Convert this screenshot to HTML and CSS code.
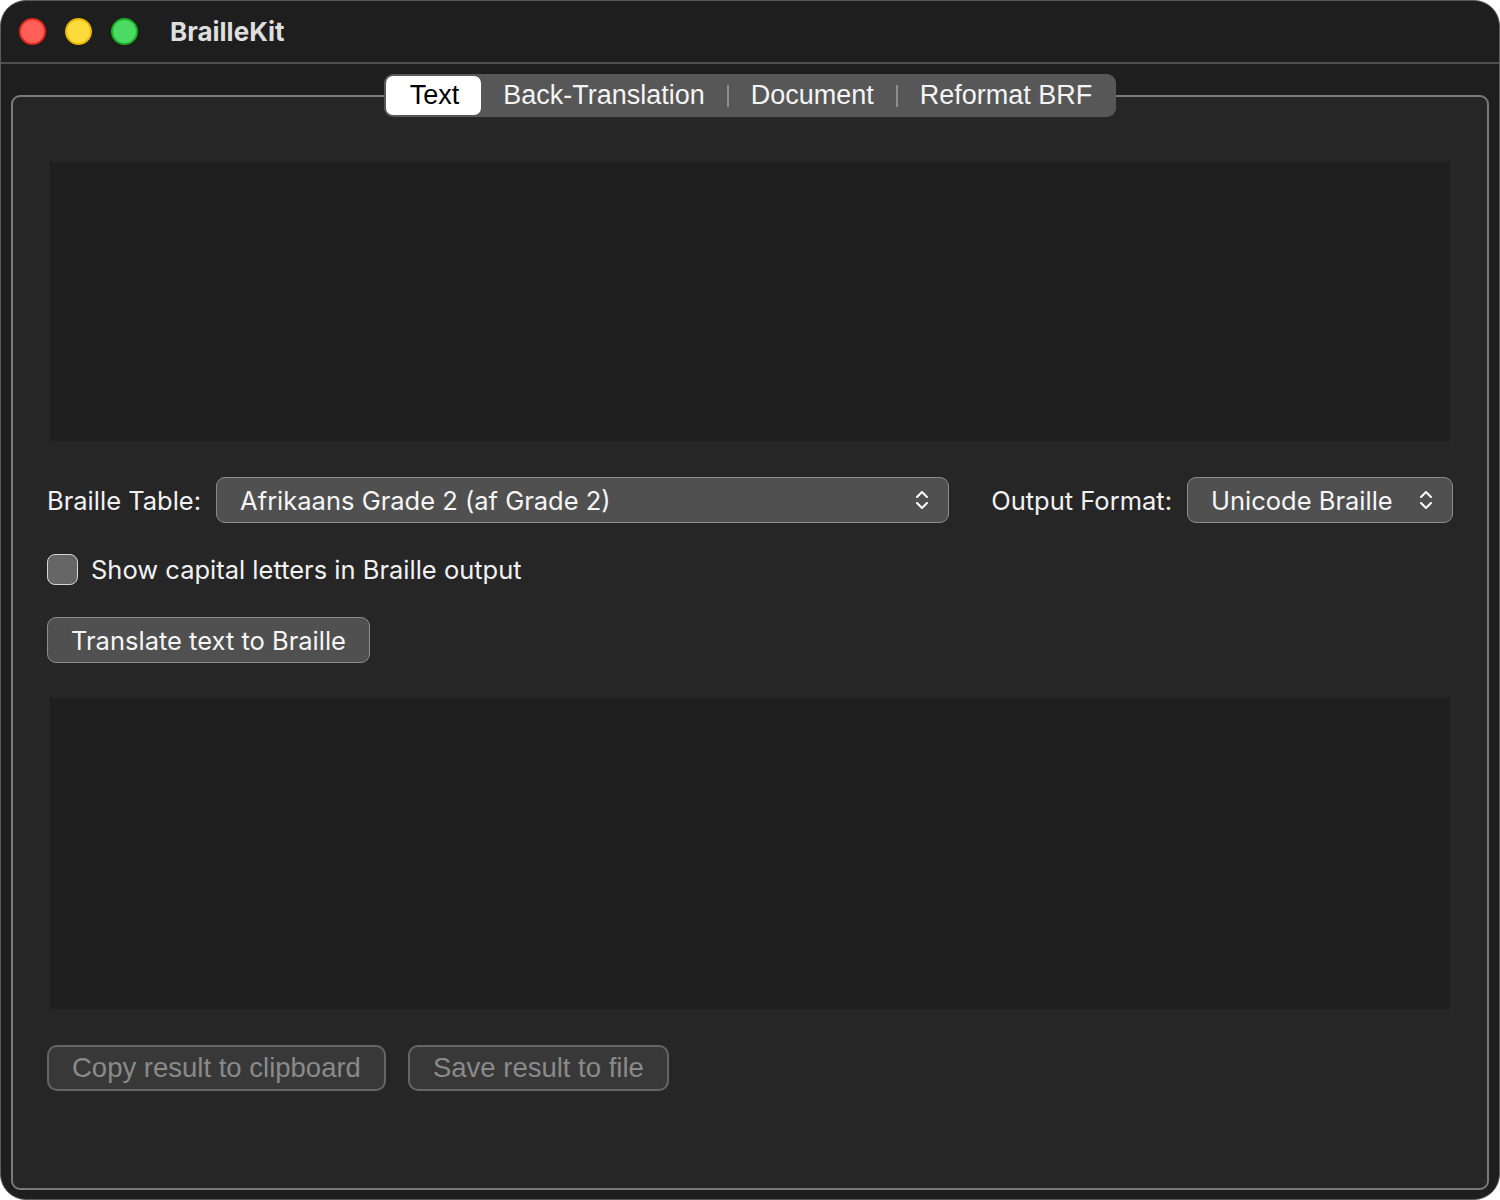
FILE: index.html
```html
<!DOCTYPE html>
<html lang="en">
<head>
    <meta charset="UTF-8">
    <meta name="viewport" content="width=device-width, initial-scale=1.0">
    <title>BrailleKit</title>
    <link rel="stylesheet" href="styles.css">
</head>
<body>
    <div class="window">
        <header class="titlebar">
            <span class="light red"></span>
            <span class="light yellow"></span>
            <span class="light green"></span>
            <h1>BrailleKit</h1>
        </header>

        <div class="tabview">
            <nav class="tabs">
                <span class="tab selected">Text</span>
                <span class="tab">Back-Translation</span>
                <span class="sep"></span>
                <span class="tab">Document</span>
                <span class="sep"></span>
                <span class="tab">Reformat BRF</span>
            </nav>

            <div class="pane">
                <div class="textbox input-box"></div>

                <div class="options">
                    <label class="field-label">Braille Table:</label>
                    <div class="popup wide">
                        <span>Afrikaans Grade 2 (af Grade 2)</span>
                        <svg class="chevron" width="14" height="24" viewBox="0 0 14 24">
                            <path d="M2 9 L7 4 L12 9 M2 15 L7 20 L12 15" fill="none" stroke="#fff" stroke-width="2" stroke-linecap="round" stroke-linejoin="round"/>
                        </svg>
                    </div>
                    <label class="field-label format-label">Output Format:</label>
                    <div class="popup format">
                        <span>Unicode Braille</span>
                        <svg class="chevron" width="14" height="24" viewBox="0 0 14 24">
                            <path d="M2 9 L7 4 L12 9 M2 15 L7 20 L12 15" fill="none" stroke="#fff" stroke-width="2" stroke-linecap="round" stroke-linejoin="round"/>
                        </svg>
                    </div>
                </div>

                <div class="check-row">
                    <span class="checkbox"></span>
                    <span>Show capital letters in Braille output</span>
                </div>

                <div class="translate-row">
                    <button class="push">Translate text to Braille</button>
                </div>

                <div class="textbox output-box"></div>

                <div class="actions">
                    <button class="push disabled">Copy result to clipboard</button>
                    <button class="push disabled">Save result to file</button>
                </div>
            </div>
        </div>
    </div>
</body>
</html>
```

FILE: styles.css
```css
body {
    margin: 0;
    background: #ffffff;
    font-family: Inter, "Liberation Sans", sans-serif;
}
.window {
    width: 1500px;
    height: 1200px;
    box-sizing: border-box;
    background: #1e1e1e;
    border: 1px solid #5a5a5a;
    border-radius: 26px;
    display: flex;
    flex-direction: column;
    overflow: hidden;
}
.titlebar {
    height: 61px;
    display: flex;
    align-items: center;
    padding-left: 18px;
    border-bottom: 2px solid #4e4e4e;
    flex-shrink: 0;
}
.light {
    width: 27px;
    height: 27px;
    box-sizing: border-box;
    border-radius: 50%;
    margin-right: 19px;
}
.light.red {
    background: #ff5f57;
    border: 2px solid #e0281f;
}
.light.yellow {
    background: #fedb3c;
    border: 2px solid #e8b500;
}
.light.green {
    background: #4cd964;
    border: 2px solid #18b020;
}
.titlebar h1 {
    margin: 0 0 0 13px;
    font-size: 26px;
    font-weight: 700;
    color: #dedede;
}
.tabview {
    flex: 1;
    margin: 31px 10px 9px 10px;
    background: #262626;
    border: 2px solid #7a7a7a;
    border-radius: 9px;
    display: flex;
    flex-direction: column;
}
.tabs {
    align-self: center;
    margin-top: -23px;
    display: flex;
    align-items: center;
    background: #575757;
    border-radius: 9px;
    padding: 2px;
    font-family: "Liberation Sans", Arial, sans-serif;
    font-size: 27px;
    color: #f4f4f4;
}
.tab {
    padding: 0 22px;
    line-height: 39px;
}
.tab.selected {
    background: #ffffff;
    color: #000000;
    border-radius: 7px;
    padding: 0 22px 0 24px;
}
.sep {
    width: 2px;
    height: 22px;
    background: #8e8e8e;
}
.pane {
    padding: 0 34px;
    display: flex;
    flex-direction: column;
}
.textbox {
    margin: 0 3px;
    background: #1f1f1f;
}
.input-box {
    margin-top: 45px;
    height: 279px;
}
.output-box {
    margin-top: 35px;
    height: 311px;
}
.options {
    margin-top: 36px;
    display: flex;
    align-items: center;
    height: 46px;
}
.field-label {
    font-size: 25.5px;
    color: #f2f2f2;
    margin-right: 15px;
}
.format-label {
    margin-left: 42px;
}
.popup {
    height: 46px;
    box-sizing: border-box;
    background: #505050;
    border: 1px solid #8c8c8c;
    border-radius: 9px;
    display: flex;
    align-items: center;
    justify-content: space-between;
    padding: 0 19px 0 23px;
    font-size: 25.5px;
    color: #f6f6f6;
}
.popup.wide {
    flex: 1;
}
.popup.format {
    width: 266px;
}
.check-row {
    margin-top: 31px;
    display: flex;
    align-items: center;
    font-size: 25.5px;
    color: #f2f2f2;
}
.checkbox {
    width: 31px;
    height: 31px;
    box-sizing: border-box;
    background: #666666;
    border: 1px solid #d6d6d6;
    border-radius: 8px;
    margin-right: 13px;
}
.translate-row {
    margin-top: 32px;
    display: flex;
}
.push {
    height: 46px;
    box-sizing: border-box;
    background: #505050;
    border: 1px solid #8c8c8c;
    border-radius: 9px;
    padding: 0 23px;
    font-family: Inter, "Liberation Sans", sans-serif;
    font-size: 25.5px;
    color: #f6f6f6;
}
.actions {
    margin-top: 36px;
    display: flex;
    gap: 22px;
}
.push.disabled {
    background: #383838;
    border: 2px solid #656565;
    border-radius: 10px;
    font-family: "Liberation Sans", Arial, sans-serif;
    font-size: 27.5px;
    color: #8a8a8a;
}
```
